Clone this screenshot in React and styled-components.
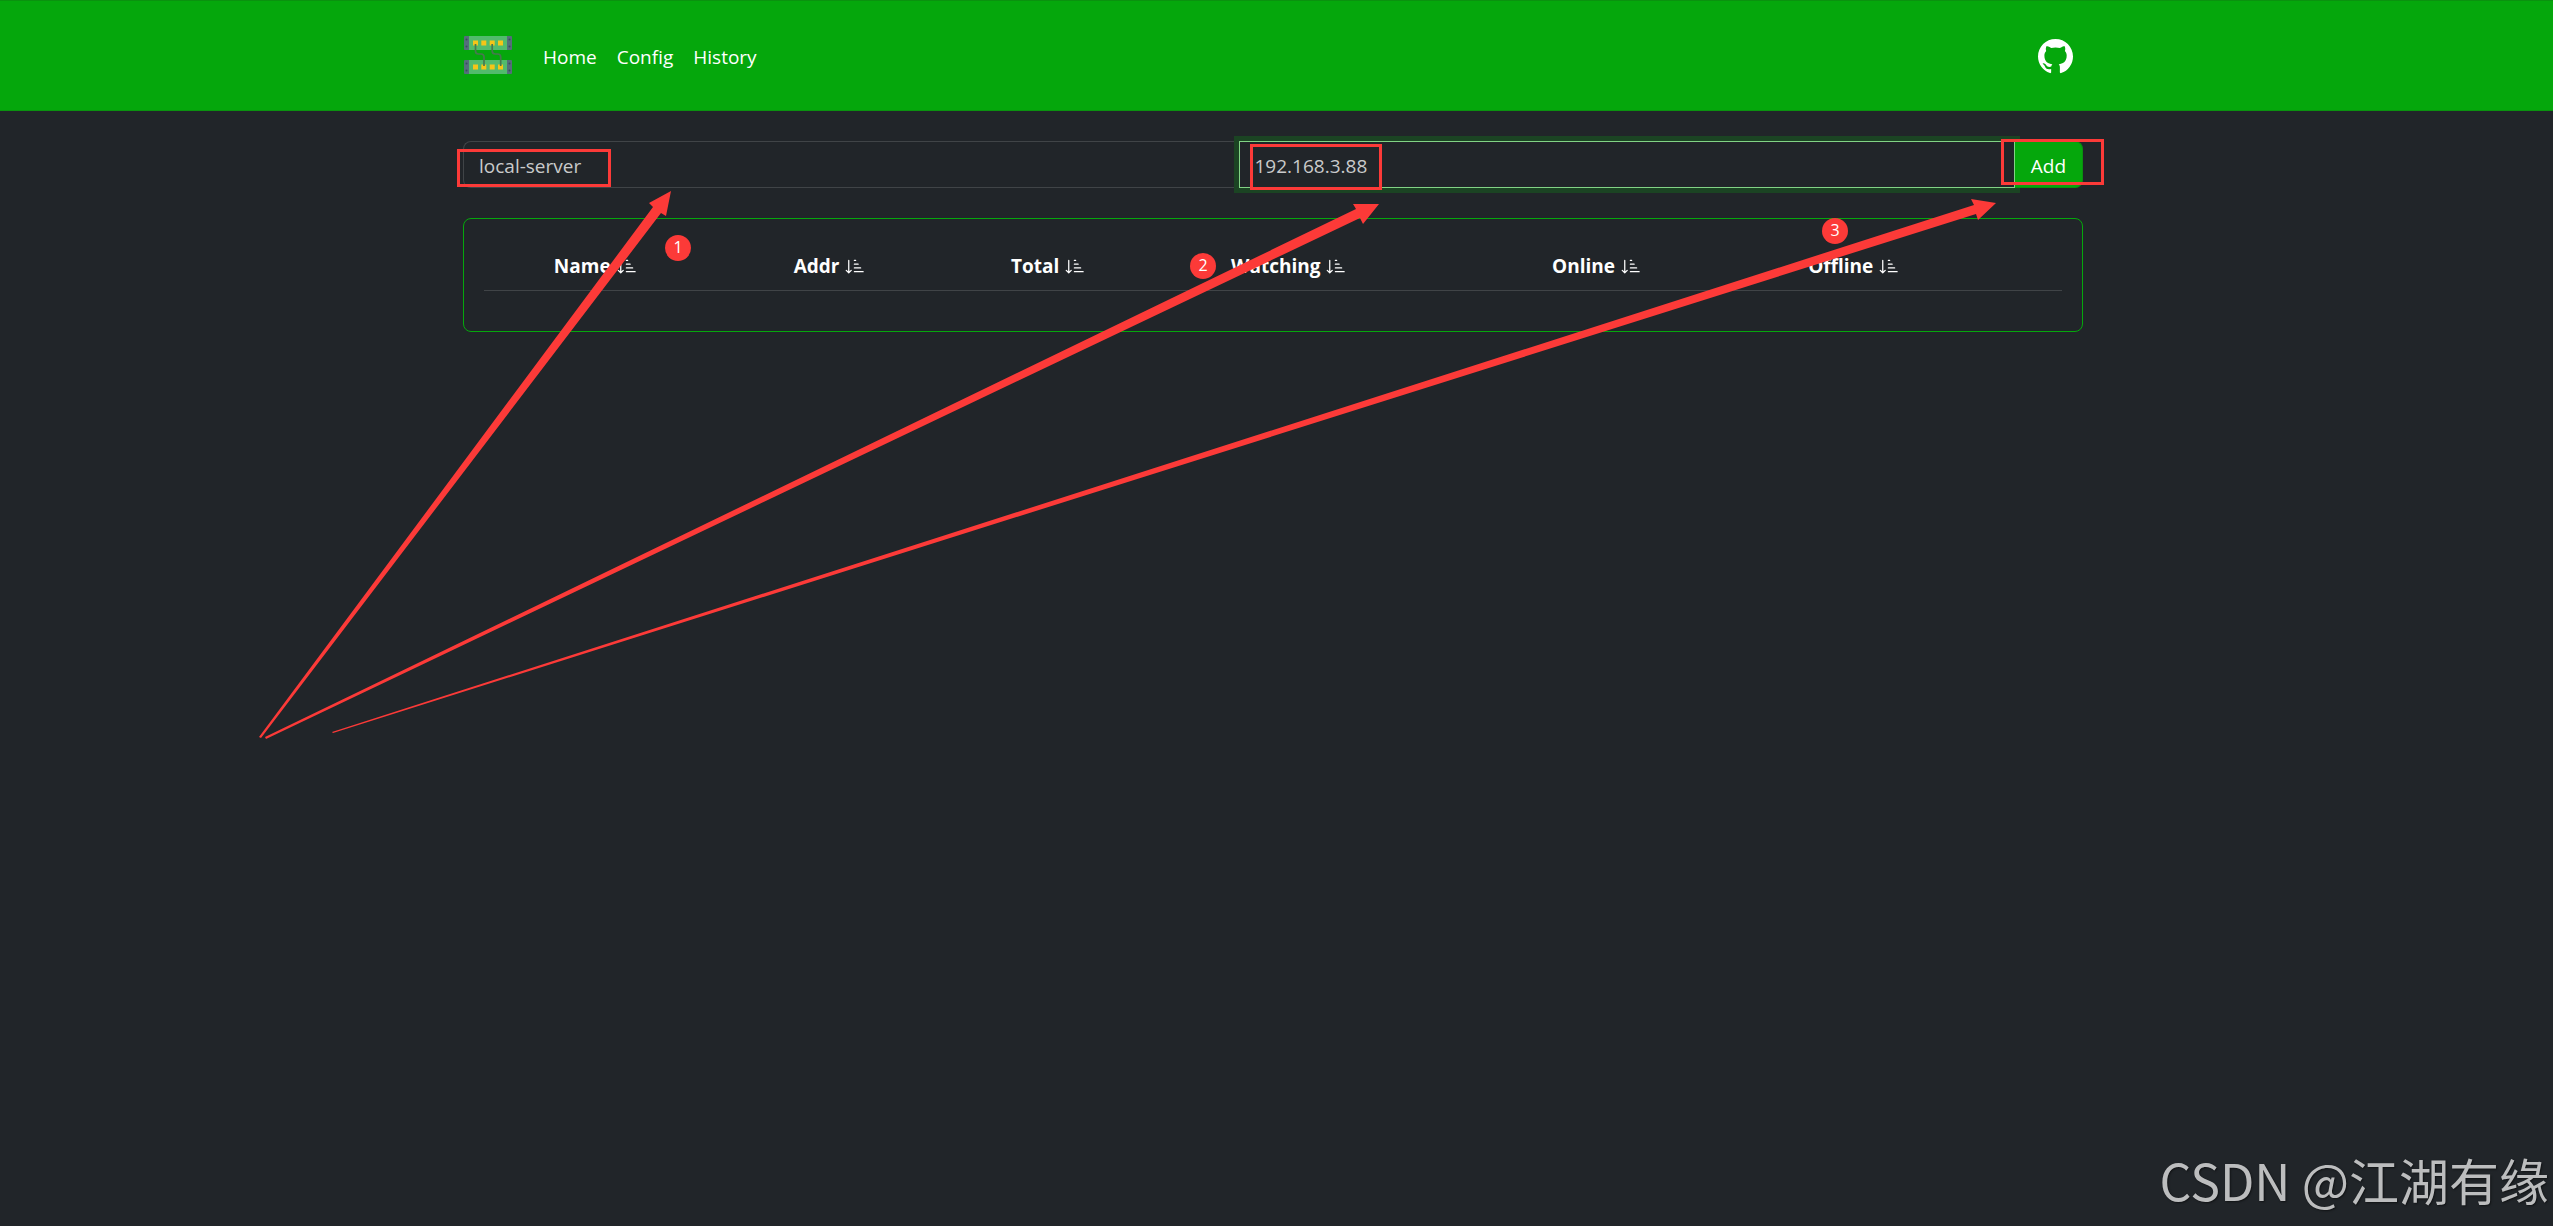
import { useState } from "react";
import styled, { createGlobalStyle } from "styled-components";
import { BsGithub, BsSortDownAlt } from "react-icons/bs";

const NAV_LINKS = ["Home", "Config", "History"];

const COLUMNS = [
  { title: "Name", width: "14.1%" },
  { title: "Addr", width: "15.6%" },
  { title: "Total", width: "12.1%" },
  { title: "Watching", width: "18.4%" },
  { title: "Online", width: "20.6%" },
  { title: "Offline", width: "12%" },
];

const HIGHLIGHTS = [
  { x: -6, y: 38, width: 154, height: 38 },
  { x: 787, y: 33, width: 132, height: 46 },
  { x: 1538, y: 28, width: 103, height: 46 },
];

const STEPS = [
  { x: 202, y: 124 },
  { x: 727, y: 142 },
  { x: 1359, y: 107 },
];

const ARROWS = [
  "-204,626 190,96 186,92 208,80 203,105 198,102 -202,627",
  "-198,626 893,98 890,93 916,93 900,113 897,107 -197,628",
  "-131,621 1511,94 1508,88 1533,92 1515,109 1513,103 -130,622",
];

const App = () => {
  const [name, setName] = useState("local-server");
  const [addr, setAddr] = useState("192.168.3.88");

  return (
    <Page>
      <GlobalStyle />
      <Header>
        <Nav>
          <Brand href="#" aria-label="Network">
            <Logo />
          </Brand>
          {NAV_LINKS.map((link) => (
            <NavLink key={link} href={`#${link.toLowerCase()}`}>
              {link}
            </NavLink>
          ))}
          <GithubLink href="#github" aria-label="GitHub">
            <BsGithub size={35} />
          </GithubLink>
        </Nav>
      </Header>
      <Main>
        <Container>
          <AddForm onSubmit={(e) => e.preventDefault()}>
            <TextInput
              aria-label="Name"
              value={name}
              onChange={(e) => setName(e.target.value)}
            />
            <TextInput
              aria-label="Addr"
              $active
              value={addr}
              onChange={(e) => setAddr(e.target.value)}
            />
            <AddButton type="submit">Add</AddButton>
          </AddForm>
          <Card>
            <HostTable>
              <thead>
                <tr>
                  {COLUMNS.map(({ title, width }) => (
                    <TableHeader key={title} $width={width}>
                      {title} <BsSortDownAlt size={20} />
                    </TableHeader>
                  ))}
                  <TableHeader as="td" />
                </tr>
              </thead>
              <tbody />
            </HostTable>
          </Card>
          <Annotations />
        </Container>
      </Main>
      <Watermark>CSDN @江湖有缘</Watermark>
    </Page>
  );
};

const Logo = () => (
  <svg width="50" height="50" viewBox="0 0 50 50">
    {[5, 29].map((y) => (
      <g key={y}>
        <rect x="1" y={y} width="48" height="14" rx="1" fill="#546e7a" />
        <rect x="6" y={y} width="38" height="14" fill="#52bb6c" />
        {[3, 46].map((x) => (
          <g key={x} fill="#37505c">
            <circle cx={x + 0.5} cy={y + 3.5} r="1" />
            <circle cx={x + 0.5} cy={y + 10.5} r="1" />
          </g>
        ))}
        {[10, 18.3, 26.7, 35].map((x) => (
          <rect key={x} x={x} y={y + 4.5} width="5" height="5" fill="#f5c518" />
        ))}
      </g>
    ))}
    <g fill="none" stroke="#47784f" strokeWidth="1.7">
      <path d="M12.5 13v7q0 3 3 3h2.5q3 0 3 3v9" />
      <path d="M29.2 13v7q0 3 3 3h2.5q3 0 3 3v9" />
    </g>
  </svg>
);

const Annotations = () => (
  <>
    <ArrowLayer>
      {ARROWS.map((points) => (
        <polygon key={points} points={points} />
      ))}
    </ArrowLayer>
    {HIGHLIGHTS.map((box) => (
      <Highlight
        key={box.x}
        $x={box.x}
        $y={box.y}
        $width={box.width}
        $height={box.height}
      />
    ))}
    {STEPS.map((step, index) => (
      <Step key={step.x} $x={step.x} $y={step.y}>
        {index + 1}
      </Step>
    ))}
  </>
);

const GlobalStyle = createGlobalStyle`
  * {
    box-sizing: border-box;
  }

  body {
    margin: 0;
    background-color: #212529;
    color: white;
    font-family: "Open Sans", "Noto Sans CJK SC", sans-serif;
    font-size: 19px;
    line-height: 30px;
  }
`;

const Page = styled.div`
  min-height: 100vh;
  position: relative;
  overflow: hidden;
`;

const Header = styled.header`
  padding: 30px 22px 29px 15px;
  background-color: #05a70c;
  border: solid #0a920f;
  border-width: 1px 0;
`;

const Nav = styled.nav`
  max-width: 1620px;
  height: 50px;
  margin: 0 auto;
  display: flex;
  align-items: center;
`;

const Brand = styled.a`
  height: 50px;
  margin-right: 20px;
`;

const NavLink = styled.a`
  padding: 12px 10px 10px;
  color: white;
  text-decoration: none;
`;

const GithubLink = styled.a`
  margin-left: auto;
  padding: 0 10px;
  display: flex;
  color: white;
`;

const Main = styled.main`
  padding: 0 22px 0 15px;
`;

const Container = styled.div`
  position: relative;
  max-width: 1620px;
  margin: 0 auto;
  padding-top: 30px;
`;

const AddForm = styled.form`
  display: flex;
  margin-bottom: 30px;
`;

const TextInput = styled.input`
  flex: 1;
  min-width: 0;
  height: 47px;
  padding: 2px 15px 0;
  font: inherit;
  color: #c9cacb;
  background-color: #212529;
  border: 1px solid ${({ $active }) => ($active ? "#82d385" : "#404447")};
  border-radius: ${({ $active }) => ($active ? "0" : "8px 0 0 8px")};
  border-right-width: ${({ $active }) => ($active ? "1px" : "0")};
  box-shadow: ${({ $active }) => ($active ? "0 0 0 5px #1b4423" : "none")};
  outline: none;
`;

const AddButton = styled.button`
  width: 68px;
  padding: 2px 0 0;
  font: inherit;
  color: white;
  background-color: #05a70c;
  border: 1px solid #0a920f;
  border-left: 0;
  border-radius: 0 8px 8px 0;
`;

const Card = styled.section`
  padding: 20px;
  border: 1px solid #05a70c;
  border-radius: 8px;
`;

const HostTable = styled.table`
  width: 100%;
  margin-bottom: 20px;
  table-layout: fixed;
  border-collapse: collapse;
`;

const TableHeader = styled.th`
  width: ${({ $width }) => $width};
  height: 51px;
  padding: 12px 10px 8px;
  font-weight: bold;
  white-space: nowrap;
  text-align: center;
  border-bottom: 1px solid #404447;

  svg {
    margin-left: 1px;
    vertical-align: -3px;
  }
`;

const ArrowLayer = styled.svg`
  position: absolute;
  top: 0;
  left: 0;
  width: 100%;
  height: 100%;
  overflow: visible;
  pointer-events: none;
  fill: #fc3a38;
`;

const Highlight = styled.div`
  position: absolute;
  left: ${({ $x }) => $x}px;
  top: ${({ $y }) => $y}px;
  width: ${({ $width }) => $width}px;
  height: ${({ $height }) => $height}px;
  border: 3px solid #fc3a38;
  pointer-events: none;
`;

const Step = styled.span`
  position: absolute;
  left: ${({ $x }) => $x}px;
  top: ${({ $y }) => $y}px;
  width: 26px;
  height: 26px;
  border-radius: 50%;
  background-color: #fc3a38;
  font-size: 16px;
  line-height: 24px;
  text-align: center;
`;

const Watermark = styled.div`
  position: absolute;
  right: 4px;
  bottom: 17px;
  color: #bcbdbe;
  font-family: "Noto Sans CJK SC", sans-serif;
  font-size: 50px;
  line-height: 60px;
  text-shadow: 1px 1px 2px rgba(0, 0, 0, 0.5);
`;

export default App;
